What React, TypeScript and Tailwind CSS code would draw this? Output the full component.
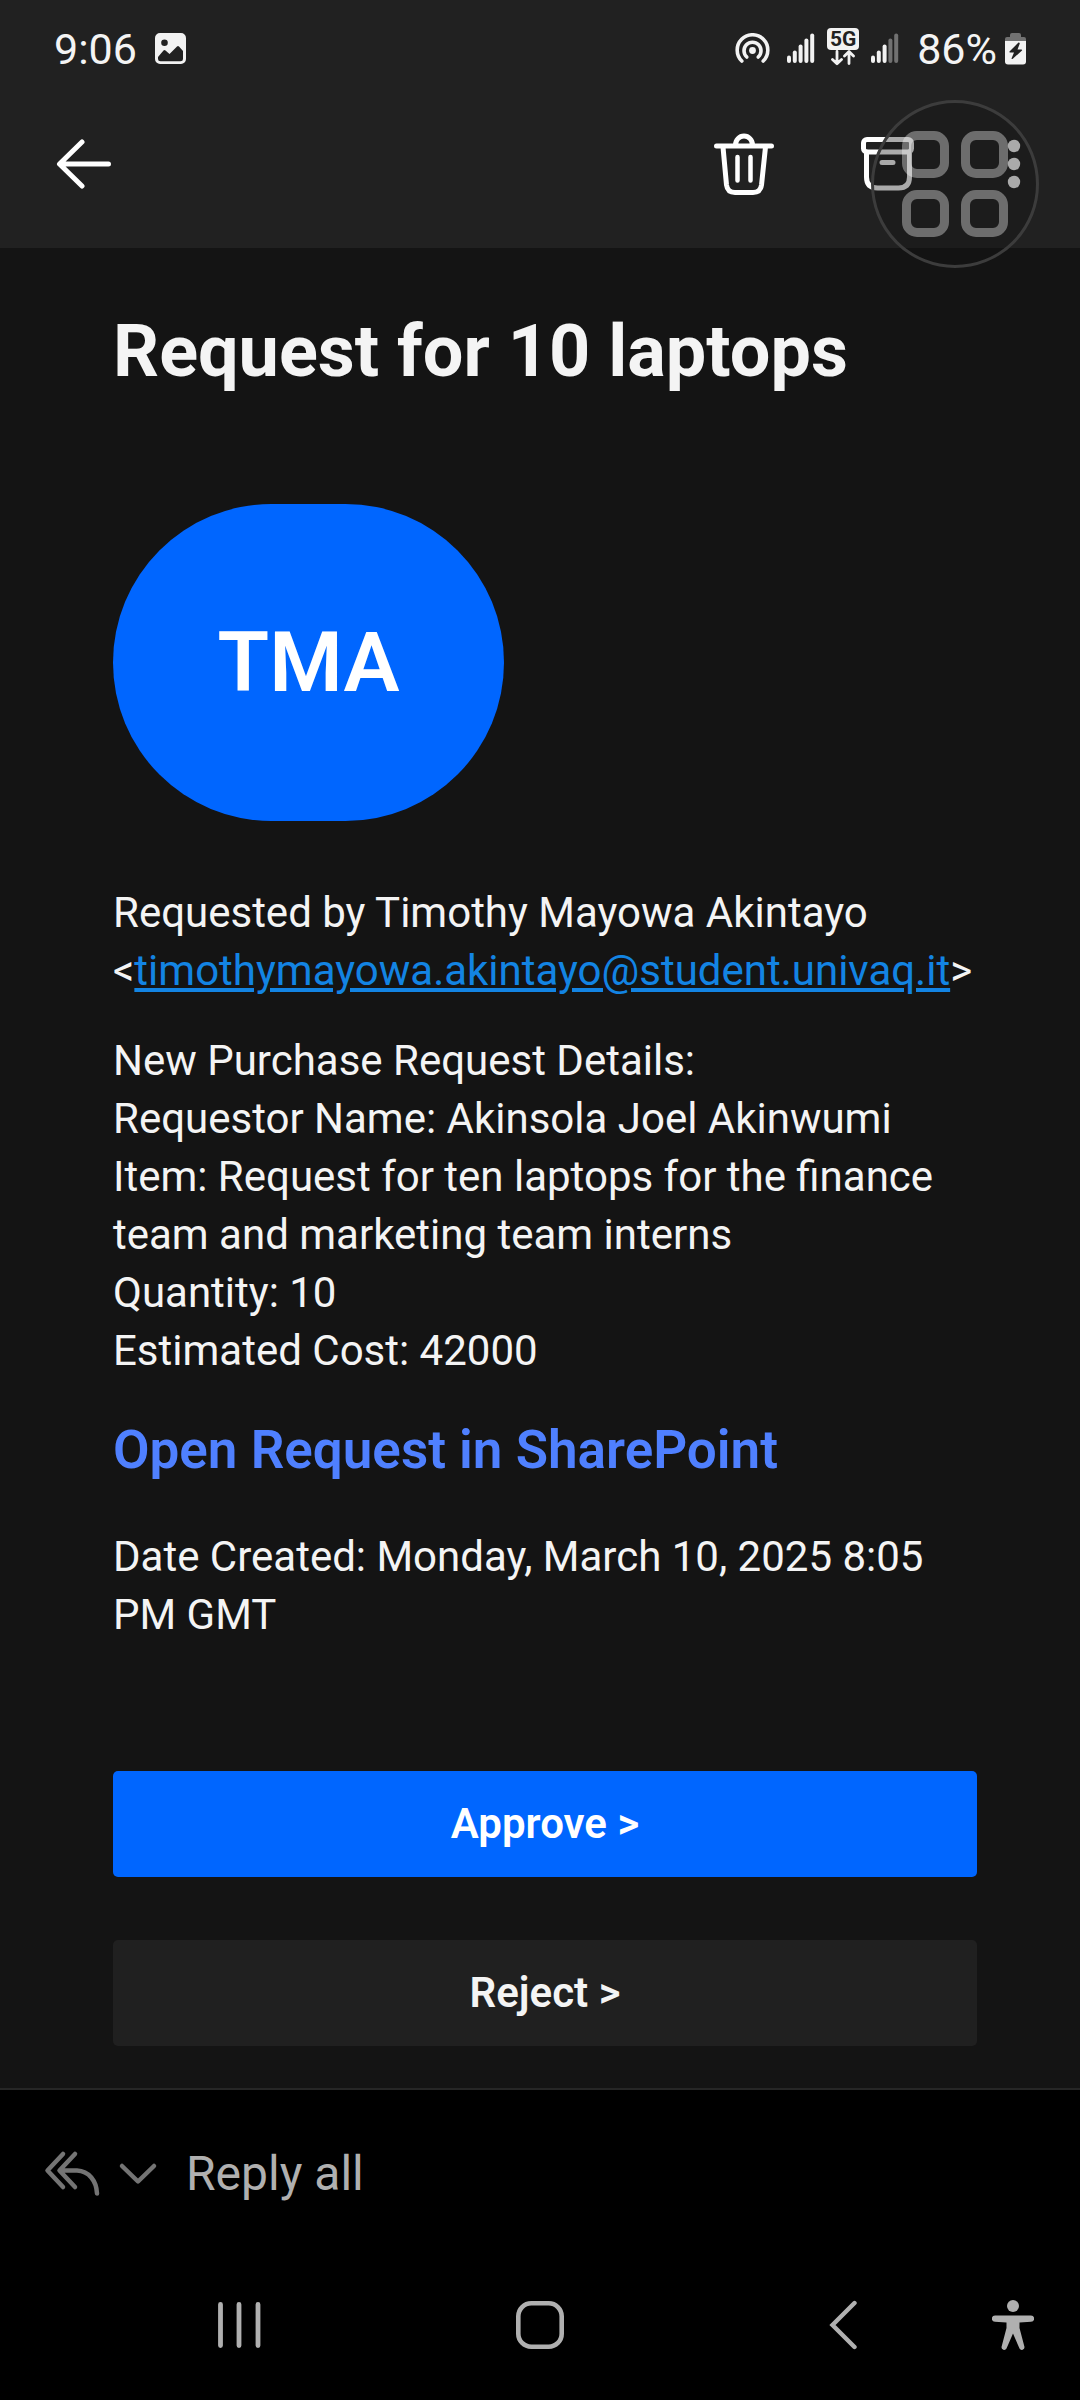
import React from "react";

const detailLines = [
  "New Purchase Request Details:",
  "Requestor Name: Akinsola Joel Akinwumi",
  "Item: Request for ten laptops for the finance team and marketing team interns",
  "Quantity: 10",
  "Estimated Cost: 42000",
];

function PictureIcon() {
  return (
    <svg width="32" height="32" viewBox="0 0 32 32" aria-hidden="true">
      <path
        fill="#f2f2f2"
        fillRule="evenodd"
        d="M5 0h21a5 5 0 0 1 5 5v21a5 5 0 0 1-5 5H5a5 5 0 0 1-5-5V5a5 5 0 0 1 5-5ZM9.500 6.500a3.300 3.300 0 1 0 0 6.600a3.300 3.300 0 0 0 0-6.600ZM3 24v2q0 2.300 2.500 2.300h20q2.500 0 2.500-2.300V18l-4-4.500q-1-1-2 0L14.500 21l-4-3.500q-1-.8-2 0Z"
      />
    </svg>
  );
}

function HotspotIcon() {
  return (
    <svg width="36" height="32" viewBox="0 0 36 32" fill="none" stroke="#f2f2f2" strokeWidth="3.600" strokeLinecap="round" aria-hidden="true">
      <path d="M6.800 28A15.300 15.300 0 1 1 28.200 28" />
      <path d="M11.800 24A8.500 8.500 0 1 1 23.200 24" />
      <circle cx="17.500" cy="17.500" r="3.400" fill="#f2f2f2" stroke="none" />
    </svg>
  );
}

function SignalIcon({ bars }: { bars: number }) {
  return (
    <svg width="28" height="32" viewBox="0 0 28 32" strokeWidth="4" strokeLinecap="round" aria-hidden="true">
      {[24.500, 19.500, 13.500, 7.500, 2.500].map((top, i) => (
        <path key={top} d={`M${2 + i * 5.800} ${top}V28`} stroke={i < bars ? "#f2f2f2" : "#717171"} />
      ))}
    </svg>
  );
}

function DataBadge() {
  return (
    <div className="flex w-8 flex-col items-center">
      <span className="flex h-[22px] w-8 items-center justify-center rounded-[4px] bg-[#f2f2f2] text-[21px] font-bold leading-none text-[#212121]">
        5G
      </span>
      <svg width="28" height="16" viewBox="0 0 28 16" fill="none" stroke="#f2f2f2" strokeWidth="2.800" strokeLinecap="round" strokeLinejoin="round" aria-hidden="true">
        <path d="M8 1.500V13.500M3.500 9.500L8 13.800L12.500 9.500M20 13.500V2M15.500 6L20 1.600L24.500 6" />
      </svg>
    </div>
  );
}

function BatteryIcon() {
  return (
    <svg width="22" height="32" viewBox="0 0 22 32" aria-hidden="true">
      <path fill="#717171" d="M0 8V6a2 2 0 0 1 2-2h3V2a2 2 0 0 1 2-2h7a2 2 0 0 1 2 2v2h3a2 2 0 0 1 2 2v2Z" />
      <path fill="#f2f2f2" d="M0 8h21v20.500a3 3 0 0 1-3 3H3a3 3 0 0 1-3-3Z" />
      <path fill="#212121" d="M13.500 9.500L4.500 18.500q-.5 1 .5 1H9L6.500 25.500q.3 1 1.300.3L17 17.500q.5-1-.5-1H12.500L14.800 10.500q-.3-1.200-1.300-1Z" />
    </svg>
  );
}

function FloatingMenu() {
  return (
    <button
      aria-label="Assistant menu"
      className="absolute right-[41px] top-[100px] flex size-[168px] items-center justify-center rounded-full border-3 border-[#3c3c3c] bg-[#131313]/36"
    >
      <span className="grid grid-cols-2 gap-3">
        <span className="size-[47px] rounded-[15px] border-9 border-white/36" />
        <span className="size-[47px] rounded-[15px] border-9 border-white/36" />
        <span className="size-[47px] rounded-[15px] border-9 border-white/36" />
        <span className="size-[47px] rounded-[15px] border-9 border-white/36" />
      </span>
    </button>
  );
}

export default function App() {
  return (
    <div className="relative flex min-h-screen flex-col bg-[#141414] font-['Roboto',sans-serif] text-[42px] leading-[58px] text-[#f4f4f4]">
      <header className="bg-[#212121] pb-[18px]">
        <div className="flex h-[98px] items-center justify-between pl-[54px] pr-[53px] text-[43px] leading-none text-[#f4f4f4]">
          <div className="flex items-center gap-[18px]">
            <span>9:06</span>
            <PictureIcon />
          </div>
          <div className="flex items-center">
            <HotspotIcon />
            <span className="ml-4"><SignalIcon bars={5} /></span>
            <span className="mb-1 ml-3"><DataBadge /></span>
            <span className="ml-3"><SignalIcon bars={3} /></span>
            <span className="ml-[18px]">86%</span>
            <span className="ml-2"><BatteryIcon /></span>
          </div>
        </div>
        <div className="flex h-[132px] items-center pl-[56px] pr-[59px]">
          <button aria-label="Back">
            <svg width="56" height="52" viewBox="0 0 56 52" fill="none" stroke="#fff" strokeWidth="5" strokeLinecap="round" strokeLinejoin="round">
              <path d="M26 4L3.500 26L26 48M4 26H52.500" />
            </svg>
          </button>
          <button aria-label="Delete" className="ml-auto">
            <svg width="60" height="64" viewBox="0 0 60 64" fill="none" stroke="#fff" strokeWidth="5" strokeLinecap="round" strokeLinejoin="round">
              <path d="M2.500 14H57.500M21.500 13a8.500 9 0 0 1 17 0M9 15L12.500 53Q13.500 60.500 21 60.500H39Q46.500 60.500 47.500 53L51.500 15" />
              <path strokeWidth="4.500" d="M23.500 25V48.500M36.500 25V48.500" />
            </svg>
          </button>
          <button aria-label="Archive" className="ml-[86px]">
            <svg width="56" height="56" viewBox="0 0 56 56" fill="none" stroke="#fff" strokeWidth="5" strokeLinecap="round">
              <rect x="3.500" y="3.500" width="48" height="12.500" rx="3.500" />
              <path d="M6.500 16V41Q6.500 52 17.500 52H38.500Q49.500 52 49.500 41V16M22 26.500H33" />
            </svg>
          </button>
          <button aria-label="More options" className="ml-[91px]">
            <svg width="14" height="52" viewBox="0 0 14 52" fill="#fff">
              <circle cx="7" cy="8" r="6.200" />
              <circle cx="7" cy="26" r="6.200" />
              <circle cx="7" cy="44" r="6.200" />
            </svg>
          </button>
        </div>
      </header>

      <main className="flex-1 pb-[42px] pl-[113px] pr-[103px]">
        <h1 className="mt-[60px] text-[72px] font-bold leading-[88px]">Request for 10 laptops</h1>
        <div className="mt-[108px] flex h-[317px] w-[391px] items-center justify-center rounded-full bg-[#0066ff] text-[84px] font-semibold text-white">
          TMA
        </div>
        <p className="mt-[63px]">
          Requested by Timothy Mayowa Akintayo
          <br />
          &lt;
          <a
            href="mailto:timothymayowa.akintayo@student.univaq.it"
            className="text-[#1384e3] underline decoration-4 underline-offset-[3px]"
          >
            timothymayowa.akintayo@student.univaq.it
          </a>
          &gt;
        </p>
        <div className="mt-8">
          {detailLines.map((line) => (
            <p key={line}>{line}</p>
          ))}
        </div>
        <a href="#sharepoint" className="mt-[34px] block text-[53px] font-semibold leading-[72px] text-[#4f80ff]">
          Open Request in SharePoint
        </a>
        <p className="mt-[42px]">Date Created: Monday, March 10, 2025 8:05 PM GMT</p>
        <div className="mt-[127px] flex flex-col gap-[63px] font-semibold">
          <button className="h-[106px] rounded-[5px] bg-[#0066ff] text-white">Approve &gt;</button>
          <button className="h-[106px] rounded-[5px] bg-[#202020]">Reject &gt;</button>
        </div>
      </main>

      <footer className="border-t-2 border-[#262626] bg-black text-[#b0b0b0]">
        <button className="flex h-[168px] items-center pl-11 text-[48px] leading-none">
          <svg width="58" height="48" viewBox="0 0 58 48" fill="none" stroke="#747474" strokeWidth="4.500" strokeLinecap="round" strokeLinejoin="round" aria-hidden="true">
            <path d="M19 4L3.500 20.500L19 37M31 4L15.500 20.500L31 37M16 20.500H33C45 21 52.500 31 53 43.500" />
          </svg>
          <svg className="ml-4" width="40" height="24" viewBox="0 0 40 24" fill="none" stroke="#747474" strokeWidth="4.500" strokeLinecap="round" strokeLinejoin="round" aria-hidden="true">
            <path d="M4 4L20 19.500L36 4" />
          </svg>
          <span className="ml-7">Reply all</span>
        </button>
        <nav className="flex h-[142px] items-center pb-2 pl-[88px] pr-[46px]">
          <div className="grid flex-1 grid-cols-3 place-items-center">
            <button aria-label="Recent apps">
              <svg width="46" height="52" viewBox="0 0 46 52" stroke="#b0b0b0" strokeWidth="4.800" strokeLinecap="round">
                <path d="M4.500 5.500V46.500M23 5.500V46.500M42 5.500V46.500" />
              </svg>
            </button>
            <button aria-label="Home">
              <svg width="52" height="52" viewBox="0 0 52 52" fill="none" stroke="#b0b0b0" strokeWidth="4.600">
                <rect x="4.300" y="4.300" width="43.400" height="43.400" rx="13" />
              </svg>
            </button>
            <button aria-label="Back navigation">
              <svg width="32" height="52" viewBox="-2 0 32 52" fill="none" stroke="#b0b0b0" strokeWidth="4.400" strokeLinecap="round">
                <path d="M27.500 4L5.500 26L27.500 48" />
              </svg>
            </button>
          </div>
          <button aria-label="Accessibility">
            <svg width="42" height="52" viewBox="0 0 42 52" fill="#b0b0b0">
              <circle cx="21" cy="7" r="6" />
              <path d="M3 16.500H39a3 3 0 0 1 0 6.300L27.500 23.500V29L32.500 48a2.700 2.700 0 0 1-5 1.600L21 34.500L14.500 49.600A2.700 2.700 0 0 1 9.500 48L14.500 29V23.500L3 22.800a3 3 0 0 1 0-6.300Z" />
            </svg>
          </button>
        </nav>
      </footer>

      <FloatingMenu />
    </div>
  );
}
